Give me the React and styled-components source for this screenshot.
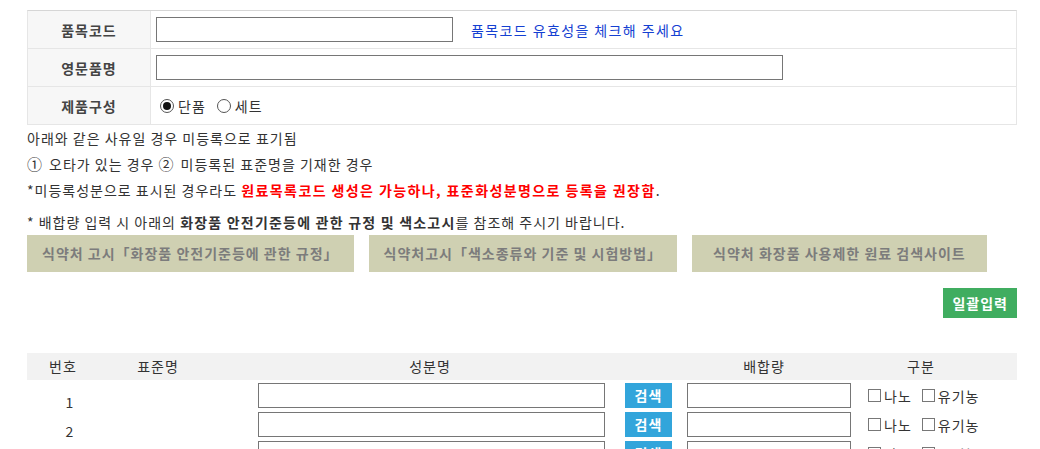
import React from 'react';
import styled, { createGlobalStyle } from 'styled-components';

const Global = createGlobalStyle`
    body {
        margin: 0;
        background: #fff;
        font-family: "Noto Sans CJK KR", "Noto Sans", sans-serif;
        font-size: 14px;
        letter-spacing: 1px;
        color: #333;
    }
`

const Page = styled.div`
    width: 990px;
    padding: 10px 0 0 27px;
`
const InfoTable = styled.div`
    display: grid;
    grid-template-columns: 123px 1fr;
    border-top: 1px solid #d6d6d6;
    border-left: 1px solid #e6e6e6;
    border-right: 1px solid #e6e6e6;
`
const Label = styled.div`
    height: 37px;
    border-bottom: 1px solid #e6e6e6;
    border-right: 1px solid #e6e6e6;
    background: #f7f7f7;
    display: flex;
    align-items: center;
    justify-content: center;
    font-weight: bold;
    color: #444;
`
const Value = styled.div`
    height: 37px;
    border-bottom: 1px solid #e6e6e6;
    display: flex;
    align-items: center;
    padding-left: 5px;
`
const TextInput = styled.div`
    box-sizing: border-box;
    width: ${props => props.w}px;
    height: 25px;
    border: 1px solid #767676;
    background: #fff;
    flex-shrink: 0;
`
const Hint = styled.span`
    margin-left: 18px;
    color: #1440d2;
    letter-spacing: 1.4px;
`
const RadioGroup = styled.div`
    display: flex;
    align-items: center;
    padding-left: 4px;
`
const Radio = styled.span`
    box-sizing: border-box;
    width: 14px;
    height: 14px;
    border-radius: 50%;
    border: 1px solid #555;
    display: flex;
    align-items: center;
    justify-content: center;
    margin-left: ${props => props.first ? 0 : 11}px;
    &::after {
        content: '';
        width: 8px;
        height: 8px;
        border-radius: 50%;
        background: ${props => props.checked ? '#111' : 'transparent'};
    }
`
const OptionText = styled.span`
    margin-left: 4px;
`

const Notes = styled.div`
    line-height: 26px;
`
const NoteLine = styled.div`
    margin-top: ${props => props.gap || 0}px;
`
const Circled = styled.span`
    margin-right: 6px;
    font-size: 15px;
`
const Red = styled.b`
    color: #ff0000;
    letter-spacing: 1.4px;
`
const Strong = styled.b`
    letter-spacing: 1.2px;
`
const LinkRow = styled.div`
    display: flex;
    gap: 15px;
`
const LinkButton = styled.div`
    background: #cfd0b2;
    color: #7c7c7c;
    font-weight: bold;
    height: 37px;
    line-height: 37px;
    padding: 0 ${props => props.pad || 15}px;
`
const BulkRow = styled.div`
    display: flex;
    justify-content: flex-end;
    margin-top: 16px;
`
const BulkButton = styled.div`
    background: #40ad60;
    color: #fff;
    font-weight: bold;
    height: 30px;
    line-height: 30px;
    padding: 0 9px;
`
const Head = styled.div`
    margin-top: 35px;
    display: grid;
    grid-template-columns: 72px 118px 426px 242px 72px 1fr;
    height: 27px;
    line-height: 27px;
    background: #f2f2f2;
    text-align: center;
`
const Rows = styled.div`
    display: flex;
    flex-direction: column;
    gap: 4px;
    padding-top: 3px;
`
const Row = styled.div`
    display: flex;
    align-items: center;
    height: 25px;
`
const Num = styled.div`
    box-sizing: border-box;
    width: 86px;
    height: 25px;
    padding-top: 7px;
    line-height: 25px;
    text-align: center;
    margin-right: 145px;
`
const SearchButton = styled.div`
    width: 47px;
    height: 25px;
    line-height: 25px;
    background: #32a5db;
    color: #fff;
    font-weight: bold;
    text-align: center;
    margin: 0 15px 0 20px;
    flex-shrink: 0;
`
const Checks = styled.div`
    display: flex;
    align-items: center;
    margin-left: 17px;
`
const Box = styled.span`
    box-sizing: border-box;
    width: 13px;
    height: 13px;
    border: 1px solid #777;
    background: #fff;
    margin-left: ${props => props.first ? 0 : 10}px;
`
const BoxText = styled.span`
    margin-left: 3px;
`

const rows = [1, 2, 3]

export default function App() {
    return (
        <Page>
            <Global />
            <InfoTable>
                <Label>품목코드</Label>
                <Value>
                    <TextInput w={297} />
                    <Hint>품목코드 유효성을 체크해 주세요</Hint>
                </Value>
                <Label>영문품명</Label>
                <Value>
                    <TextInput w={627} />
                </Value>
                <Label>제품구성</Label>
                <Value>
                    <RadioGroup>
                        <Radio first checked />
                        <OptionText>단품</OptionText>
                        <Radio />
                        <OptionText>세트</OptionText>
                    </RadioGroup>
                </Value>
            </InfoTable>

            <Notes>
                <NoteLine>아래와 같은 사유일 경우 미등록으로 표기됨</NoteLine>
                <NoteLine>
                    <Circled>①</Circled>오타가 있는 경우 <Circled>②</Circled>미등록된 표준명을 기재한 경우
                </NoteLine>
                <NoteLine>
                    *미등록성분으로 표시된 경우라도 <Red>원료목록코드 생성은 가능하나, 표준화성분명으로 등록을 권장함</Red>.
                </NoteLine>
                <NoteLine gap={6}>
                    * 배합량 입력 시 아래의 <Strong>화장품 안전기준등에 관한 규정 및 색소고시</Strong>를 참조해 주시기 바랍니다.
                </NoteLine>
            </Notes>

            <LinkRow>
                <LinkButton>식약처 고시「화장품 안전기준등에 관한 규정」</LinkButton>
                <LinkButton>식약처고시「색소종류와 기준 및 시험방법」</LinkButton>
                <LinkButton pad={21}>식약처 화장품 사용제한 원료 검색사이트</LinkButton>
            </LinkRow>

            <BulkRow>
                <BulkButton>일괄입력</BulkButton>
            </BulkRow>

            <Head>
                <div>번호</div>
                <div>표준명</div>
                <div>성분명</div>
                <div>배합량</div>
                <div>구분</div>
                <div />
            </Head>
            <Rows>
                {rows.map(n => (
                    <Row key={n}>
                        <Num>{n}</Num>
                        <TextInput w={347} />
                        <SearchButton>검색</SearchButton>
                        <TextInput w={164} />
                        <Checks>
                            <Box first />
                            <BoxText>나노</BoxText>
                            <Box />
                            <BoxText>유기농</BoxText>
                        </Checks>
                    </Row>
                ))}
            </Rows>
        </Page>
    )
}
